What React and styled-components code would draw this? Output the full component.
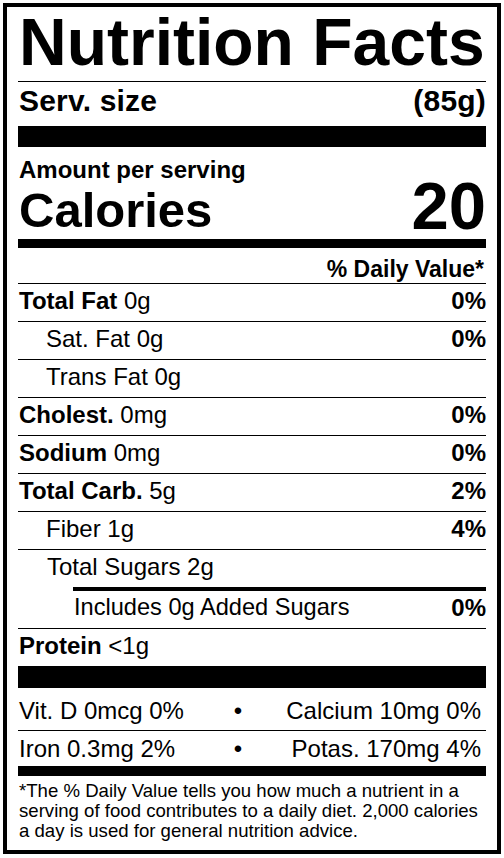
import React from 'react';
import styled, { createGlobalStyle } from 'styled-components';

const GlobalStyle = createGlobalStyle`
  body {
    margin: 0;
    background: #fff;
    color: #000;
    font-family: "Liberation Sans", Arial, sans-serif;
  }
`;

const Label = styled.div`
  box-sizing: border-box;
  width: 498px;
  margin: 3px;
  border: 4px solid #000;
  padding: 0 11px;
  background: #fff;
`;

const Title = styled.h1`
  margin: 0;
  padding: 0 0 4px 1px;
  border-bottom: 1px solid #000;
  font-size: 66px;
  line-height: 70px;
  font-weight: 700;
  white-space: nowrap;
`;

const ServingRow = styled.div`
  display: flex;
  justify-content: space-between;
  padding: 1px 0 8px 1px;
  font-size: 30px;
  line-height: 35px;
  font-weight: 700;
  letter-spacing: 0.2px;
`;

const Rule = styled.div`
  height: ${({ $h }) => $h}px;
  background: #000;
`;

const Amount = styled.div`
  padding: 10px 0 0 1px;
  font-size: 24px;
  line-height: 26px;
  font-weight: 700;
`;

const CaloriesRow = styled.div`
  display: flex;
  justify-content: space-between;
  align-items: flex-end;
  height: 56px;
  padding-left: 1px;
  font-weight: 700;
`;

const CaloriesLabel = styled.span`
  font-size: 49px;
  line-height: 58px;
`;

const CaloriesValue = styled.span`
  font-size: 67px;
  line-height: 66px;
`;

const DailyValueHead = styled.div`
  padding: 7px 2px 0 0;
  text-align: right;
  font-size: 23px;
  line-height: 28px;
  font-weight: 700;
`;

const NutrientRow = styled.div`
  display: flex;
  justify-content: space-between;
  margin-left: ${({ $inset }) => $inset || 0}px;
  border-top: ${({ $thick }) => ($thick ? 4 : 1)}px solid #000;
  padding: 0 0 4px ${({ $pad }) => $pad || 1}px;
  font-size: ${({ $size }) => $size || 24}px;
  line-height: 33px;
  white-space: nowrap;
`;

const Name = styled.span`
  font-weight: ${({ $bold }) => ($bold ? 700 : 400)};
`;

const Percent = styled.span`
  font-size: 24px;
  font-weight: 700;
`;

const MineralRow = styled.div`
  display: grid;
  grid-template-columns: 204px 30px 1fr;
  padding: ${({ $top }) => $top}px 0 ${({ $bottom }) => $bottom}px 1px;
  border-bottom: ${({ $line }) => ($line ? '1px solid #000' : 'none')};
  font-size: 24px;
  line-height: 30px;
  white-space: nowrap;
`;

const Dot = styled.span`
  text-align: center;
`;

const MineralRight = styled.span`
  justify-self: end;
  padding-right: 5px;
`;

const Footnote = styled.p`
  margin: 0;
  padding: 5px 0 9px 1px;
  font-size: 18.6px;
  line-height: 20px;
  white-space: nowrap;
`;

const nutrients = [
  { name: 'Total Fat', amount: '0g', dv: '0%', bold: true },
  { name: 'Sat. Fat', amount: '0g', dv: '0%', pad: 28 },
  { name: 'Trans Fat', amount: '0g', pad: 28 },
  { name: 'Cholest.', amount: '0mg', dv: '0%', bold: true },
  { name: 'Sodium', amount: '0mg', dv: '0%', bold: true },
  { name: 'Total Carb.', amount: '5g', dv: '2%', bold: true },
  { name: 'Fiber', amount: '1g', dv: '4%', pad: 28 },
  { name: 'Total Sugars', amount: '2g', pad: 29 },
  { name: 'Includes 0g Added Sugars', dv: '0%', inset: 55, thick: true, size: 23.6 },
  { name: 'Protein', amount: '<1g', bold: true },
];

const minerals = [
  { left: 'Vit. D 0mcg 0%', right: 'Calcium 10mg 0%', top: 8, bottom: 4, line: true },
  { left: 'Iron 0.3mg 2%', right: 'Potas. 170mg 4%', top: 3, bottom: 2 },
];

const App = () => {
  return (
    <>
      <GlobalStyle />
      <Label>
        <Title>Nutrition Facts</Title>
        <ServingRow>
          <span>Serv. size</span>
          <span>(85g)</span>
        </ServingRow>
        <Rule $h={21} />
        <Amount>Amount per serving</Amount>
        <CaloriesRow>
          <CaloriesLabel>Calories</CaloriesLabel>
          <CaloriesValue>20</CaloriesValue>
        </CaloriesRow>
        <Rule $h={9} />
        <DailyValueHead>% Daily Value*</DailyValueHead>
        {nutrients.map((n) => (
          <NutrientRow
            key={n.name}
            $inset={n.inset}
            $thick={n.thick}
            $pad={n.pad}
            $size={n.size}
          >
            <span>
              <Name $bold={n.bold}>{n.name}</Name>
              {n.amount && ` ${n.amount}`}
            </span>
            {n.dv && <Percent>{n.dv}</Percent>}
          </NutrientRow>
        ))}
        <Rule $h={22} />
        {minerals.map((m) => (
          <MineralRow key={m.left} $top={m.top} $bottom={m.bottom} $line={m.line}>
            <span>{m.left}</span>
            <Dot>•</Dot>
            <MineralRight>{m.right}</MineralRight>
          </MineralRow>
        ))}
        <Rule $h={10} />
        <Footnote>
          *The % Daily Value tells you how much a nutrient in a
          <br />
          serving of food contributes to a daily diet. 2,000 calories
          <br />
          a day is used for general nutrition advice.
        </Footnote>
      </Label>
    </>
  );
};

export default App;
